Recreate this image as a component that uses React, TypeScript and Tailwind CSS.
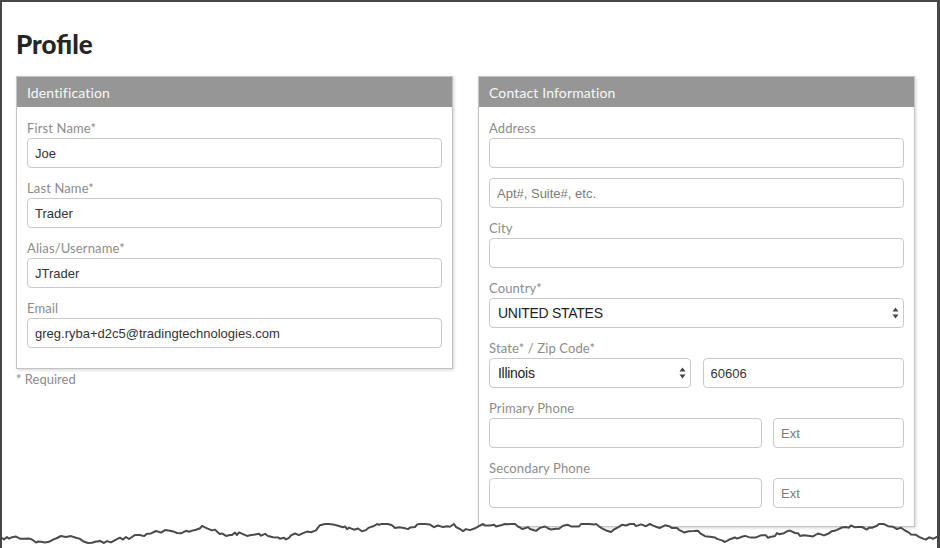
import React from "react";

const labelFont = { fontFamily: "Lato, 'Open Sans', sans-serif" };
const fieldFont = { fontFamily: "'Liberation Sans', Arial, sans-serif" };

// torn-paper edge along the bottom of the frame
const tornEdge = (() => {
  let seed = 11;
  const rand = () => {
    seed = (seed * 9301 + 49297) % 233280;
    return seed / 233280;
  };
  const pts: string[] = [];
  let y = 21;
  let x = 0;
  while (x < 940) {
    pts.push(`${x},${y.toFixed(1)}`);
    x += 2 + Math.floor(rand() * 4);
    y += (rand() - 0.5) * 6;
    y = Math.max(8, Math.min(27, y));
  }
  pts.push(`940,${y.toFixed(1)}`);
  return pts.join(" ");
})();

const Label: React.FC<{ children: React.ReactNode }> = ({ children }) => (
  <div className="text-[13px] leading-4 tracking-[0.01em] text-[#8c8c8c] mb-[2px]" style={labelFont}>
    {children}
  </div>
);

const TextInput: React.FC<{ value?: string; placeholder?: string }> = ({ value, placeholder }) => (
  <input
    defaultValue={value}
    placeholder={placeholder}
    className="block w-full h-[30px] rounded-[4px] border border-[#c9c9c9] bg-white px-[7px] text-[13px] text-[#333] placeholder:text-[#7a7a7a] outline-none"
    style={fieldFont}
  />
);

const SelectBox: React.FC<{ value: string }> = ({ value }) => (
  <div className="relative">
    <select
      defaultValue={value}
      className="block w-full h-[30px] appearance-none rounded-[4px] border border-[#c9c9c9] bg-white pl-[8px] pr-6 text-[14px] tracking-[-0.02em] text-[#222] outline-none"
      style={fieldFont}
    >
      <option>{value}</option>
    </select>
    <svg className="pointer-events-none absolute right-[5px] top-[9px]" width="7" height="12" viewBox="0 0 7 12">
      <path d="M3.5 0.5 L6.5 4.5 H0.5 Z" fill="#444" />
      <path d="M3.5 11.5 L6.5 7.5 H0.5 Z" fill="#444" />
    </svg>
  </div>
);

const Card: React.FC<{ title: string; children: React.ReactNode; bottom?: string }> = ({ title, children, bottom }) => (
  <div className="w-[437px] border border-[#c4c4c4] bg-white shadow-[1px_1px_3px_rgba(0,0,0,0.18)]">
    <div className="h-[30px] bg-[#969696] px-[10px] flex items-center text-[14px] tracking-[0.01em] text-[#f7f7f7]" style={labelFont}>
      {title}
    </div>
    <div className={`px-[10px] pt-[13px] ${bottom ?? "pb-[20px]"} flex flex-col`}>{children}</div>
  </div>
);

export default function App() {
  return (
    <div className="relative w-[940px] h-[548px] overflow-hidden bg-white border-t-2 border-l-2 border-r-[3px] border-[#474747]">
      <div className="pl-[14px] pt-[27px]">
        <h1 className="text-[26px] font-black text-[#262626] leading-[31px] mb-[16px]" style={labelFont}>
          Profile
        </h1>
        <div className="flex gap-[25px] items-start">
          <div>
            <Card title="Identification">
              <div className="flex flex-col gap-[12px]">
                <div>
                  <Label>First Name*</Label>
                  <TextInput value="Joe" />
                </div>
                <div>
                  <Label>Last Name*</Label>
                  <TextInput value="Trader" />
                </div>
                <div>
                  <Label>Alias/Username*</Label>
                  <TextInput value="JTrader" />
                </div>
                <div>
                  <Label>Email</Label>
                  <TextInput value="greg.ryba+d2c5@tradingtechnologies.com" />
                </div>
              </div>
            </Card>
            <div className="mt-[2px] text-[13px] leading-4 text-[#8c8c8c]" style={labelFont}>
              * Required
            </div>
          </div>

          <Card title="Contact Information" bottom="pb-[18px]">
            <div className="flex flex-col gap-[12px]">
              <div>
                <Label>Address</Label>
                <TextInput />
                <div className="mt-[10px]">
                  <TextInput placeholder="Apt#, Suite#, etc." />
                </div>
              </div>
              <div>
                <Label>City</Label>
                <TextInput />
              </div>
              <div>
                <Label>Country*</Label>
                <SelectBox value="UNITED STATES" />
              </div>
              <div>
                <Label>State* / Zip Code*</Label>
                <div className="grid grid-cols-2 gap-[12px]">
                  <SelectBox value="Illinois" />
                  <TextInput value="60606" />
                </div>
              </div>
              <div>
                <Label>Primary Phone</Label>
                <div className="grid grid-cols-[1fr_131px] gap-[11px]">
                  <TextInput />
                  <TextInput placeholder="Ext" />
                </div>
              </div>
              <div>
                <Label>Secondary Phone</Label>
                <div className="grid grid-cols-[1fr_131px] gap-[11px]">
                  <TextInput />
                  <TextInput placeholder="Ext" />
                </div>
              </div>
            </div>
          </Card>
        </div>
      </div>

      <svg className="absolute left-[-2px] bottom-0" width="940" height="32" viewBox="0 0 940 32">
        <polygon points={`${tornEdge} 940,32 0,32`} fill="#fff" />
        <polyline points={tornEdge} fill="none" stroke="#4a4a4a" strokeWidth="2" strokeLinejoin="round" />
      </svg>
    </div>
  );
}
